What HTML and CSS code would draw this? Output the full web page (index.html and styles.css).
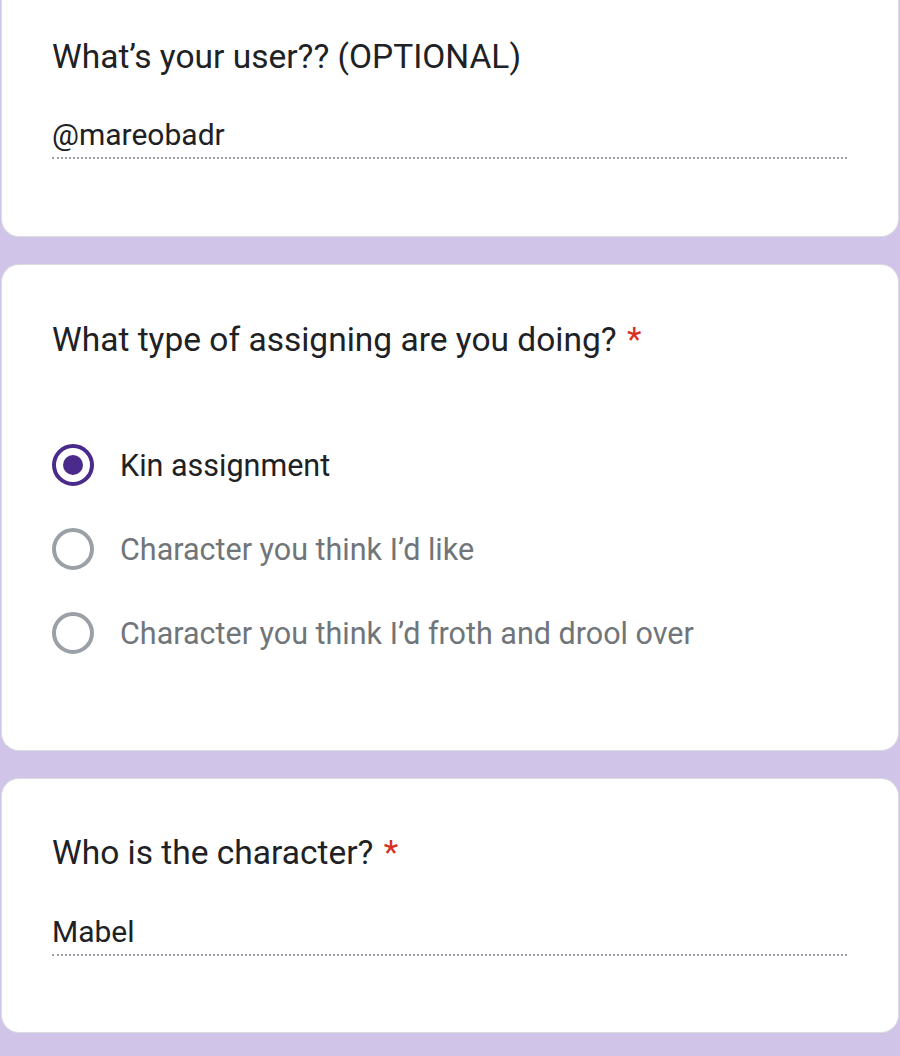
FILE: index.html
```html
<!DOCTYPE html>
<html>
<head>
<meta charset="utf-8">
<link rel="stylesheet" href="styles.css">
</head>
<body>
<div class="form">
  <section class="card card-cut">
    <div class="q-title">What’s your user?? (OPTIONAL)</div>
    <div class="answer">
      <div class="answer-text">@mareobadr</div>
    </div>
  </section>

  <section class="card card-choice">
    <div class="q-title">What type of assigning are you doing? <span class="req">*</span></div>
    <div class="options">
      <div class="option selected">
        <span class="radio"><span class="dot"></span></span>
        <span class="opt-label">Kin assignment</span>
      </div>
      <div class="option">
        <span class="radio"></span>
        <span class="opt-label">Character you think I’d like</span>
      </div>
      <div class="option">
        <span class="radio"></span>
        <span class="opt-label">Character you think I’d froth and drool over</span>
      </div>
    </div>
  </section>

  <section class="card card-text">
    <div class="q-title">Who is the character? <span class="req">*</span></div>
    <div class="answer">
      <div class="answer-text">Mabel</div>
    </div>
  </section>
</div>
</body>
</html>
```

FILE: styles.css
```css
html, body {
  margin: 0;
  padding: 0;
}
body {
  background: #d1c4e9;
  font-family: Roboto, "Liberation Sans", Arial, sans-serif;
  color: #202124;
  width: 900px;
  height: 1056px;
  overflow: hidden;
}
.form {
  display: flex;
  flex-direction: column;
  gap: 27px;
  padding: 0 1px;
}
.card {
  background: #ffffff;
  border: 1.5px solid #dadce0;
  border-radius: 18px;
  padding: 0 50px;
  box-sizing: border-box;
}
.card-cut {
  border-top: none;
  border-radius: 0 0 18px 18px;
  height: 237px;
  padding-top: 37px;
}
.card-choice {
  height: 487px;
  padding-top: 55px;
}
.card-text {
  height: 255px;
  padding-top: 54px;
}
.q-title {
  font-size: 33.5px;
  line-height: 40px;
  color: #202124;
}
.req {
  color: #d93025;
  margin-left: 2px;
}
.answer {
  margin-top: 39px;
  width: 795px;
  border-bottom: 2px dotted #9aa0a6;
  padding-bottom: 3px;
}
.card-text .answer {
  margin-top: 40px;
}
.answer-text {
  font-size: 30px;
  line-height: 38px;
  color: #202124;
}
.options {
  margin-top: 84px;
  display: flex;
  flex-direction: column;
  gap: 42px;
}
.option {
  display: flex;
  align-items: center;
  gap: 26px;
  height: 42px;
}
.radio {
  width: 42px;
  height: 42px;
  box-sizing: border-box;
  border: 4px solid #9aa0a6;
  border-radius: 50%;
  display: flex;
  align-items: center;
  justify-content: center;
  flex: none;
}
.option.selected .radio {
  border-color: #4a2a8a;
}
.dot {
  width: 20px;
  height: 20px;
  border-radius: 50%;
  background: #4a2a8a;
}
.opt-label {
  font-size: 30.5px;
  color: #70757a;
}
.option.selected .opt-label {
  color: #202124;
}
```
